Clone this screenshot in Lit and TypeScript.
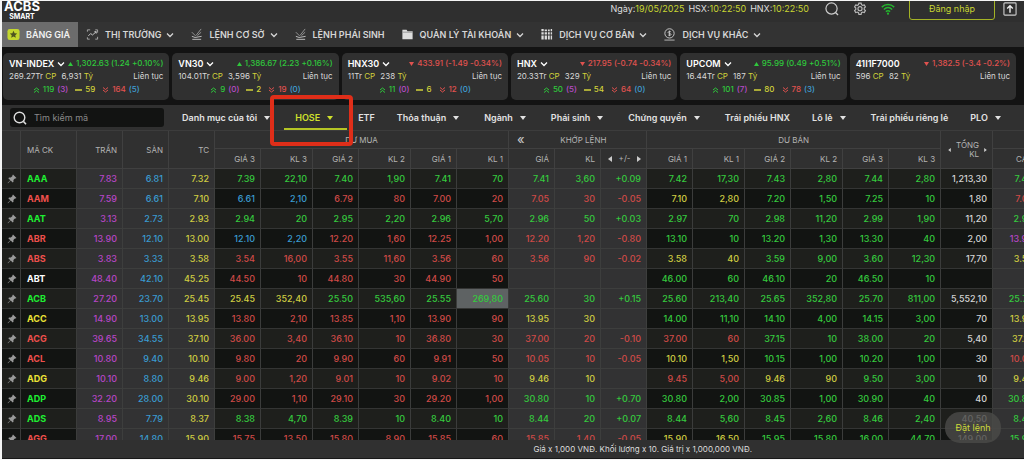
import { LitElement, html, svg, css, nothing } from "lit";
import { customElement, property } from "lit/decorators.js";

type Market = {
  name: string; menu: boolean; dir: "up" | "down"; quote: string;
  volume: string; value: string; breadth?: string[];
};

const MARKETS: Market[] = [
  { name: "VN-INDEX", menu: true, dir: "up", quote: "1,302.63 (1.24 +0.10%)", volume: "269.27Tr", value: "6,931", breadth: ["119", "3", "59", "164", "5"] },
  { name: "VN30", menu: true, dir: "up", quote: "1,386.67 (2.23 +0.16%)", volume: "104.01Tr", value: "3,596", breadth: ["9", "0", "2", "19", "0"] },
  { name: "HNX30", menu: true, dir: "down", quote: "433.91 (-1.49 -0.34%)", volume: "11Tr", value: "238", breadth: ["11", "0", "6", "12", "0"] },
  { name: "HNX", menu: true, dir: "down", quote: "217.95 (-0.74 -0.34%)", volume: "20.33Tr", value: "329", breadth: ["50", "5", "54", "64", "0"] },
  { name: "UPCOM", menu: true, dir: "up", quote: "95.99 (0.49 +0.51%)", volume: "16.44Tr", value: "187", breadth: ["101", "7", "80", "78", "3"] },
  { name: "41I1F7000", menu: false, dir: "down", quote: "1,382.5 (-3.4 -0.2%)", volume: "596", value: "82" },
];

const NAV: [string, string, boolean][] = [
  ["star", "BẢNG GIÁ", false],
  ["trend", "THỊ TRƯỜNG", true],
  ["order", "LỆNH CƠ SỞ", true],
  ["order", "LỆNH PHÁI SINH", false],
  ["folder", "QUẢN LÝ TÀI KHOẢN", true],
  ["grid", "DỊCH VỤ CƠ BẢN", true],
  ["coin", "DỊCH VỤ KHÁC", true],
];

const TABS: [string, boolean][] = [
  ["Danh mục của tôi", true], ["HOSE", true], ["ETF", false], ["Thỏa thuận", true],
  ["Ngành", true], ["Phái sinh", true], ["Chứng quyền", true], ["Trái phiếu HNX", false],
  ["Lô lẻ", true], ["Trái phiếu riêng lẻ", false], ["PLO", true],
];

/* Each cell is a colour letter followed by its value; "-" is an empty cell.
   Order: code, ceiling, floor, reference, 3 bids, match, 3 asks, total, high. */
const ROWS = [
  "gAAA p7.83 b6.81 y7.32 g7.39 g22,10 g7.40 g1,90 g7.41 g70 g7.41 g3,60 g+0.09 g7.42 g17,30 g7.43 g2,80 g7.44 g2,80 w1,213,30 g7.44",
  "rAAM p7.59 b6.61 y7.10 b6.61 b2,10 r6.79 r80 r7.00 r20 r7.05 r30 r-0.05 y7.10 y2,80 g7.20 g1,50 g7.25 g10 w1,80 r7.05",
  "gAAT p3.13 b2.73 y2.93 g2.94 g20 g2.95 g2,20 g2.96 g5,70 g2.96 g50 g+0.03 g2.97 g70 g2.98 g11,20 g2.99 g1,90 w11,20 g2.96",
  "rABR p13.90 b12.10 y13.00 b12.10 b2,20 r12.20 r1,60 r12.25 r1,00 r12.20 r1,20 r-0.80 g13.10 g10 g13.20 g1,30 g13.30 g40 w2,00 p13.90",
  "rABS p3.83 b3.33 y3.58 r3.54 r16,00 r3.55 r11,60 r3.56 r60 r3.56 r90 r-0.02 y3.58 y40 g3.59 g9,00 g3.60 g12,30 w17,70 y3.58",
  "wABT p48.40 b42.10 y45.25 r44.50 r10 r44.80 r30 r44.90 r50 - - - g46.00 g60 g46.10 g20 g46.50 g10 - -",
  "gACB p27.20 b23.70 y25.45 y25.45 y352,40 g25.50 g535,60 g25.55 g269,80 g25.60 g30 g+0.15 g25.60 g213,40 g25.65 g352,80 g25.70 g811,00 w5,552,10 g25.70",
  "yACC p14.90 b13.00 y13.95 r13.80 r2,10 r13.85 r1,10 r13.90 r90 y13.95 y30 - g14.00 g11,10 g14.10 g4,00 g14.15 g3,00 w70 y13.95",
  "rACG p39.65 b34.55 y37.10 r36.00 r3,40 r36.10 r10 r36.80 r30 r37.00 r20 r-0.10 r37.00 r60 g37.15 g10 g38.00 g20 w5,40 y37.10",
  "rACL p10.80 b9.40 y10.10 r9.80 r20 r9.90 r60 r9.91 r50 r10.05 r10 r-0.05 y10.10 y1,50 g10.15 g1,00 g10.20 g1,00 w30 r10.05",
  "yADG p10.10 b8.80 y9.46 r9.00 r1,20 r9.01 r10 r9.02 r10 y9.46 y10 - r9.45 r5,00 y9.46 y90 g9.50 g3,00 w10 y9.46",
  "gADP p32.20 b28.00 y30.10 r29.00 r1,10 r29.10 r30 r29.20 r1,00 g30.80 g10 g+0.70 g30.80 g2,00 g30.85 g1,00 g30.90 g40 w40 g30.80",
  "gADS p8.95 b7.79 y8.37 g8.38 g4,70 g8.39 g10 g8.40 g10 g8.44 g20 g+0.07 g8.44 g5,60 g8.45 g2,60 g8.46 g2,40 w40,50 g8.46",
  "rAGG p17.00 b14.80 y15.90 r15.75 r13,50 r15.80 r8,90 r15.85 r60 r15.85 r1,40 r-0.05 y15.90 y16,50 g15.95 g15,80 g16.00 g44,70 w149,00 g15.95",
].map((row) => row.split(" "));

const COLUMNS = ["pin", "code", "n", "n", "n", "n", "w", "n", "w", "n", "w", "n", "n", "n", "n", "w", "n", "w", "n", "w", "w", "n"];
const RAISED = new Set([1, 2, 3, 10, 11, 12, 20]);

const GLYPHS: Record<string, unknown> = {
  star: svg`<rect width="13" height="12" y="1" rx="2.5" fill="#c3d72e"/><path d="M6.5 3l1.2 2.6 2.8.3-2.1 1.9.6 2.8-2.5-1.5L4 10.600l.6-2.800-2.100-1.900 2.800-.3z" fill="#4d5420"/>`,
  trend: svg`<path d="M1 4V2h3M9.500 2H12v3M12 9.500V12H9.500M3.500 12H1V10" fill="none" stroke="#aaa"/><path d="M2 8.500l2.500-2.500 2 1.500L10.500 4M8.500 4h2v2" fill="none" stroke="#ccc"/>`,
  order: svg`<path d="M1.500 9l3.500 1.200 7-1.200M2 12.200h9.500" fill="none" stroke="#c4c4c4"/><path d="M11.500 1L6 8M7.500 8.200l4-3.700M1.500 4.500l4 4" fill="none" stroke="#999"/>`,
  folder: svg`<path d="M1 2h4.500l1 1.500H12V12H1z" fill="#ddd"/><path d="M1.500 4.500h10.500" stroke="#777" stroke-width=".7"/>`,
  grid: svg`<path d="M1 1h2.500v2.500H1zM1 4.500h2.500V7H1zM1 8h2.500v4.500H1zM4.500 1.500H7v2H4.500zM4.500 4.500H7V7H4.500zM4.500 8H7v4.500H4.500zM8 1.500h2v2H8zM8 4.500h2V7H8zM8 8h2v4.500H8zM11 1h1.500v2.500H11zM11 4.500h1.500V7H11zM11 8h1.500v4.500H11z" fill="#ddd"/>`,
  coin: svg`<circle cx="6.500" cy="5.800" r="5" fill="none" stroke="#ccc"/><path d="M8.200 4.300c-.5-.7-3.200-.9-3.200.5s3.200.7 3.200 2.100-2.700 1.200-3.300.4M6.500 2.800v6M1 13h11" fill="none" stroke="#ccc" stroke-width=".9"/>`,
};

const chevron = html`<svg class="chevron" viewBox="0 0 8 6" aria-hidden="true"><path d="M1 1.500l3 3 3-3" fill="none" stroke="currentColor" stroke-width="1.300"/></svg>`;
const caret = html`<svg class="caret" viewBox="0 0 9 6" aria-hidden="true"><path d="M0 1h6L3 5z" fill="currentColor"/></svg>`;

@customElement("market-card")
class MarketCard extends LitElement {
  @property({ attribute: false }) market!: Market;

  static styles = css`
    :host { display: block; box-sizing: border-box; padding: 4px 6px; height: 47px; border-radius: 5px; background: #303030; color: #d8d8d8; font-size: 8px; line-height: 13px; white-space: nowrap; }
    .line { display: flex; align-items: center; justify-content: space-between; }
    .name { display: flex; align-items: center; gap: 3px; padding: 0; border: 0; background: none; color: #fff; font: inherit; font-size: 9px; font-weight: 600; }
    .chevron { width: 8px; height: 6px; }
    .quote { display: flex; align-items: center; gap: 3px; font-weight: 500; }
    .tri { width: 5px; height: 4px; }
    .mark { width: 7px; height: 6px; }
    .breadth { display: flex; align-items: center; justify-content: center; gap: 3px; font-weight: 500; }
    .gap { margin-left: 4px; }
    .up { color: #2fc83c; }
    .down { color: #e0524f; }
    .unit, .flat { color: #d2d23a; }
    .ceil { color: #b94cc8; }
    .floor { color: #3f9fd4; }
    .value { margin-left: 3px; }
  `;

  render() {
    const m = this.market;
    const b = m.breadth;
    return html`
      <div class="line">
        <button class="name">${m.name}${m.menu ? chevron : nothing}</button>
        <span class="quote ${m.dir}">
          <svg class="tri" viewBox="0 0 5 4" aria-hidden="true"><path d=${m.dir === "up" ? "M0 4l2.500-4 2.500 4z" : "M0 0l2.500 4 2.500-4z"} fill="currentColor"/></svg>${m.quote}
        </span>
      </div>
      <div class="line">
        <span>${m.volume} <span class="unit">CP</span> <span class="value">${m.value}</span> <span class="unit">Tỷ</span></span>
        <span>Liên tục</span>
      </div>
      ${b ? html`<div class="breadth">
        <svg class="mark up" viewBox="0 0 7 6"><path d="M1 3l2.500-2 2.500 2M1 5.500l2.500-2 2.500 2" fill="none" stroke="currentColor"/></svg>
        <span class="up">${b[0]}</span><span class="ceil">(${b[1]})</span>
        <svg class="mark flat gap" viewBox="0 0 7 6"><path d="M0 3h7" stroke="currentColor" stroke-width="1.500"/></svg>
        <span class="flat">${b[2]}</span>
        <svg class="mark down gap" viewBox="0 0 7 6"><path d="M1 .5l2.500 2 2.500-2M1 3l2.500 2 2.500-2" fill="none" stroke="currentColor"/></svg>
        <span class="down">${b[3]}</span><span class="floor">(${b[4]})</span>
      </div>` : nothing}
    `;
  }
}

@customElement("price-board")
class PriceBoard extends LitElement {
  static styles = css`
    :host { display: block; overflow: hidden; background: #303030; }
    table { width: 100%; min-width: 1037px; table-layout: fixed; border-collapse: separate; border-spacing: 0; font-size: 9px; line-height: 12px; }
    .c-pin { width: 19px; }
    .c-code { width: 56px; }
    .c-n { width: 46px; }
    .c-w { width: 52px; }
    th, td { box-sizing: border-box; padding: 0 5px 0 0; border-right: 1px solid #3b3c3b; border-bottom: 1px solid #343534; text-align: right; white-space: nowrap; }
    thead th { border-color: #404040; color: #b4b4b4; font-size: 8px; font-weight: 400; background: #303030; }
    thead tr { height: 18px; }
    thead .sub { height: 20px; }
    thead .group { padding: 0; text-align: center; }
    thead .code, tbody .code { padding-left: 6px; text-align: left; }
    .match { display: flex; align-items: center; padding: 0 4px 0 8px; }
    .match span { flex: 1; }
    .fold, .step { padding: 0; border: 0; background: none; color: #ccc; font: inherit; }
    .fold { font-size: 13px; line-height: 13px; }
    .pair { display: flex; align-items: center; justify-content: space-between; padding-left: 7px; line-height: 9px; }
    .step svg { display: block; width: 4px; height: 6px; }
    .total .step svg { width: 3px; height: 4px; }
    tbody tr { height: 20px; }
    tbody td, tbody th { background: #121412; font-weight: 500; }
    tbody tr:nth-child(odd) td, tbody tr:nth-child(odd) th { background: #1e1f1c; }
    tbody .code { font-weight: 700; }
    tbody tr .raised, tbody tr:nth-child(odd) .raised { background: #323233; border-color: #3d3e3d; }
    tbody tr .flash, tbody tr:nth-child(odd) .flash { background: #5e6263; }
    tbody .pin { padding: 0 0 0 5px; }
    .pin svg { display: block; width: 10px; height: 10px; }
    .g { color: #35c93e; }
    .code.g { color: #1fee32; }
    .r { color: #cf4a47; }
    .code.r { color: #ee504c; }
    .y { color: #cfcd42; }
    .code.y { color: #ece436; }
    .b { color: #3a9bd0; }
    .p { color: #b746c6; }
    .w { color: #d4d4d4; }
    .code.w { color: #fff; }
  `;

  private step(dir: "left" | "right") {
    return html`<button class="step" aria-label=${dir}><svg viewBox="0 0 4 6"><path d=${dir === "left" ? "M4 0v6L0 3z" : "M0 0v6l4-3z"} fill="currentColor"/></svg></button>`;
  }

  render() {
    return html`
      <table>
        <colgroup>${COLUMNS.map((c) => html`<col class="c-${c}">`)}</colgroup>
        <thead>
          <tr>
            <th rowspan="2"></th>
            <th rowspan="2" class="code">MÃ CK</th>
            <th rowspan="2">TRẦN</th><th rowspan="2">SÀN</th><th rowspan="2">TC</th>
            <th colspan="6" class="group">DƯ MUA</th>
            <th colspan="3" class="group"><div class="match"><button class="fold">«</button><span>KHỚP LỆNH</span></div></th>
            <th colspan="6" class="group">DƯ BÁN</th>
            <th rowspan="2"><div class="pair total">${this.step("left")}<span>TỔNG<br>KL</span>${this.step("right")}</div></th>
            <th></th>
          </tr>
          <tr class="sub">
            <th>GIÁ 3</th><th>KL 3</th><th>GIÁ 2</th><th>KL 2</th><th>GIÁ 1</th><th>KL 1</th>
            <th>GIÁ</th><th>KL</th>
            <th><div class="pair">${this.step("left")}<span>+/-</span>${this.step("right")}</div></th>
            <th>GIÁ 1</th><th>KL 1</th><th>GIÁ 2</th><th>KL 2</th><th>GIÁ 3</th><th>KL 3</th>
            <th>CAO</th>
          </tr>
        </thead>
        <tbody>
          ${ROWS.map((row) => html`<tr>
            <td class="pin"><svg viewBox="0 0 10 10" aria-hidden="true"><path d="M6 .5l3.500 3.500-1 .6-.6-.2-1.500 1.700.1 1.700-.8.8-2-2L1 9.300l-.4-.4 2.700-2.700-2-2 .8-.8 1.700.1L5.500 2l-.2-.6z" fill="#9a9a9a"/></svg></td>
            ${row.map((cell, i) => {
              const tone = cell[0];
              const text = cell.slice(1);
              if (i === 0) return html`<th scope="row" class="code ${tone}">${text}</th>`;
              const flash = text === "269,80" ? "flash" : "";
              return html`<td class="${tone} ${RAISED.has(i) ? "raised" : ""} ${flash}">${text}</td>`;
            })}
          </tr>`)}
        </tbody>
      </table>
    `;
  }
}

@customElement("app-root")
class AppRoot extends LitElement {
  static styles = css`
    :host { display: flex; flex-direction: column; position: relative; box-sizing: border-box; height: 100vh; overflow: hidden; padding: 1px 0 1px 2px; background: #f4f4f4; color: #ddd; font-family: Inter, "Noto Sans", sans-serif; font-size: 9px; line-height: 12px; white-space: nowrap; }
    button { padding: 0; border: 0; background: none; color: inherit; font: inherit; }
    .top { display: flex; align-items: flex-end; flex: none; height: 21px; box-sizing: border-box; padding: 0 7px 2px 2px; background: #2f2f2f; overflow: hidden; }
    .brand { display: flex; flex-direction: column; align-items: center; color: #fff; font-weight: 700; }
    .word { font-size: 13px; line-height: 14px; }
    .sub { font-size: 7px; line-height: 7px; }
    .tools { display: flex; align-items: center; margin-left: auto; height: 22px; gap: 14px; }
    .clock { display: flex; gap: 4px; margin-right: 2px; }
    .clock b { color: #c8d632; font-weight: 400; }
    .tools svg { display: block; width: 14px; height: 14px; }
    .session { display: flex; align-items: center; gap: 8px; }
    .login { box-sizing: border-box; width: 86px; height: 22px; border: 1px solid #a4b325; border-radius: 3px; color: #c8d632; }
    .nav { display: flex; flex: none; height: 25px; background: #333; }
    .item { display: flex; align-items: center; gap: 6px; padding: 0 8px; font-weight: 600; color: #d6d6d6; }
    .item svg { width: 13px; height: 13px; }
    .item .chevron { width: 8px; height: 6px; margin-left: -1px; }
    .item.active { padding-left: 5px; background: #6c6c6c; color: #f2f2f2; }
    .markets { display: grid; grid-template-columns: repeat(6, minmax(0, 1fr)); gap: 3px; flex: none; padding: 6px 8px 5px 1px; background: #131313; }
    .bar { display: flex; flex: none; align-items: center; height: 26px; box-sizing: border-box; padding-left: 8px; border-bottom: 1px solid #3c3c3c; background: #303030; }
    .search { display: flex; align-items: center; gap: 7px; box-sizing: border-box; width: 154px; height: 19px; padding-left: 3px; margin-right: 7px; border-radius: 3px; background: #121312; }
    .search svg { width: 14px; height: 14px; }
    .search input { flex: 1; min-width: 0; padding: 0; border: 0; outline: 0; background: none; color: #ddd; font: inherit; }
    .search input::placeholder { color: #8a8a8a; opacity: 1; }
    .tab { display: flex; align-items: center; gap: 7px; height: 25px; box-sizing: border-box; padding: 0 11px; border-bottom: 2px solid transparent; border-top: 2px solid transparent; font-weight: 600; color: #e2e2e2; }
    .caret { width: 9px; height: 6px; }
    .tab.active { position: relative; color: #cfe02c; border-bottom-color: #b5c525; }
    .mark { position: absolute; left: -14px; right: -6px; top: -12px; bottom: -18px; border: 4px solid #df2e19; border-radius: 4px; z-index: 2; pointer-events: none; }
    price-board { flex: 1; min-height: 0; }
    .foot { flex: none; box-sizing: border-box; height: 19px; padding: 3px 0 0 52%; border-bottom: 1px solid #171717; background: #303030; font-size: 8px; }
    .place { position: absolute; right: 23px; bottom: 17px; width: 56px; height: 31px; border-radius: 15px; background: rgba(74, 74, 72, .82); color: #ccd93a; }
  `;

  render() {
    return html`
      <header class="top">
        <div class="brand"><span class="word">ACBS</span><span class="sub">SMART</span></div>
        <div class="tools">
          <div class="clock"><span>Ngày:<b>19/05/2025</b></span><span>HSX:<b>10:22:50</b></span><span>HNX:<b>10:22:50</b></span></div>
          <button aria-label="Tìm kiếm"><svg viewBox="0 0 15 15"><circle cx="7" cy="7" r="6" fill="none" stroke="#ccc" stroke-width="1.300"/><path d="M11.500 11.500l2.500 2.500" stroke="#ccc" stroke-width="1.400"/></svg></button>
          <button aria-label="Cài đặt"><svg viewBox="0 0 15 15"><path d="M6.300 1.200h2.400l.4 1.700 1.300.7 1.700-.5 1.200 2.100-1.300 1.200v1.600l1.300 1.200-1.200 2.100-1.700-.5-1.300.7-.4 1.700H6.300l-.4-1.700-1.300-.7-1.700.5-1.200-2.100L3 8V6.400L1.700 5.200l1.200-2.100 1.700.5 1.300-.7z" fill="none" stroke="#bbb" stroke-width="1.200"/><circle cx="7.500" cy="7.200" r="2.200" fill="none" stroke="#bbb" stroke-width="1.200"/></svg></button>
          <svg viewBox="0 0 15 15" aria-hidden="true"><path d="M.8 5.500c4-3.700 9.400-3.700 13.400 0M3 8c2.700-2.400 6.300-2.400 9 0M5.200 10.300c1.400-1.200 3.200-1.200 4.600 0" fill="none" stroke="#25b52f" stroke-width="1.500"/><circle cx="7.500" cy="12.500" r="1.200" fill="#25b52f"/></svg>
          <div class="session">
            <button class="login">Đăng nhập</button>
            <button aria-label="Mở rộng"><svg viewBox="0 0 15 15"><rect x="1" y="1" width="13" height="13" rx="1" fill="none" stroke="#ccc" stroke-width="1.200"/><path d="M7.500 11.500V4M4.500 7l3-3 3 3" fill="none" stroke="#eee" stroke-width="1.500"/></svg></button>
          </div>
        </div>
      </header>
      <nav class="nav">
        ${NAV.map(([icon, label, menu], i) => html`<button class="item ${i === 0 ? "active" : ""}"><svg viewBox="0 0 13 14" aria-hidden="true">${GLYPHS[icon]}</svg>${label}${menu ? chevron : nothing}</button>`)}
      </nav>
      <section class="markets">${MARKETS.map((m) => html`<market-card .market=${m}></market-card>`)}</section>
      <div class="bar">
        <label class="search"><svg viewBox="0 0 14 14" aria-hidden="true"><circle cx="6.500" cy="6.500" r="5.300" fill="none" stroke="#ddd" stroke-width="1.400"/><path d="M10.500 10.500l2.500 2.800" stroke="#ddd" stroke-width="1.600"/></svg><input type="text" placeholder="Tìm kiếm mã" aria-label="Tìm kiếm mã"></label>
        ${TABS.map(([label, menu]) => html`<button class="tab ${label === "HOSE" ? "active" : ""}">${label}${menu ? caret : nothing}${label === "HOSE" ? html`<span class="mark"></span>` : nothing}</button>`)}
      </div>
      <price-board></price-board>
      <footer class="foot">Giá x 1,000 VNĐ. Khối lượng x 10. Giá trị x 1,000,000 VNĐ.</footer>
      <button class="place">Đặt lệnh</button>
    `;
  }
}
